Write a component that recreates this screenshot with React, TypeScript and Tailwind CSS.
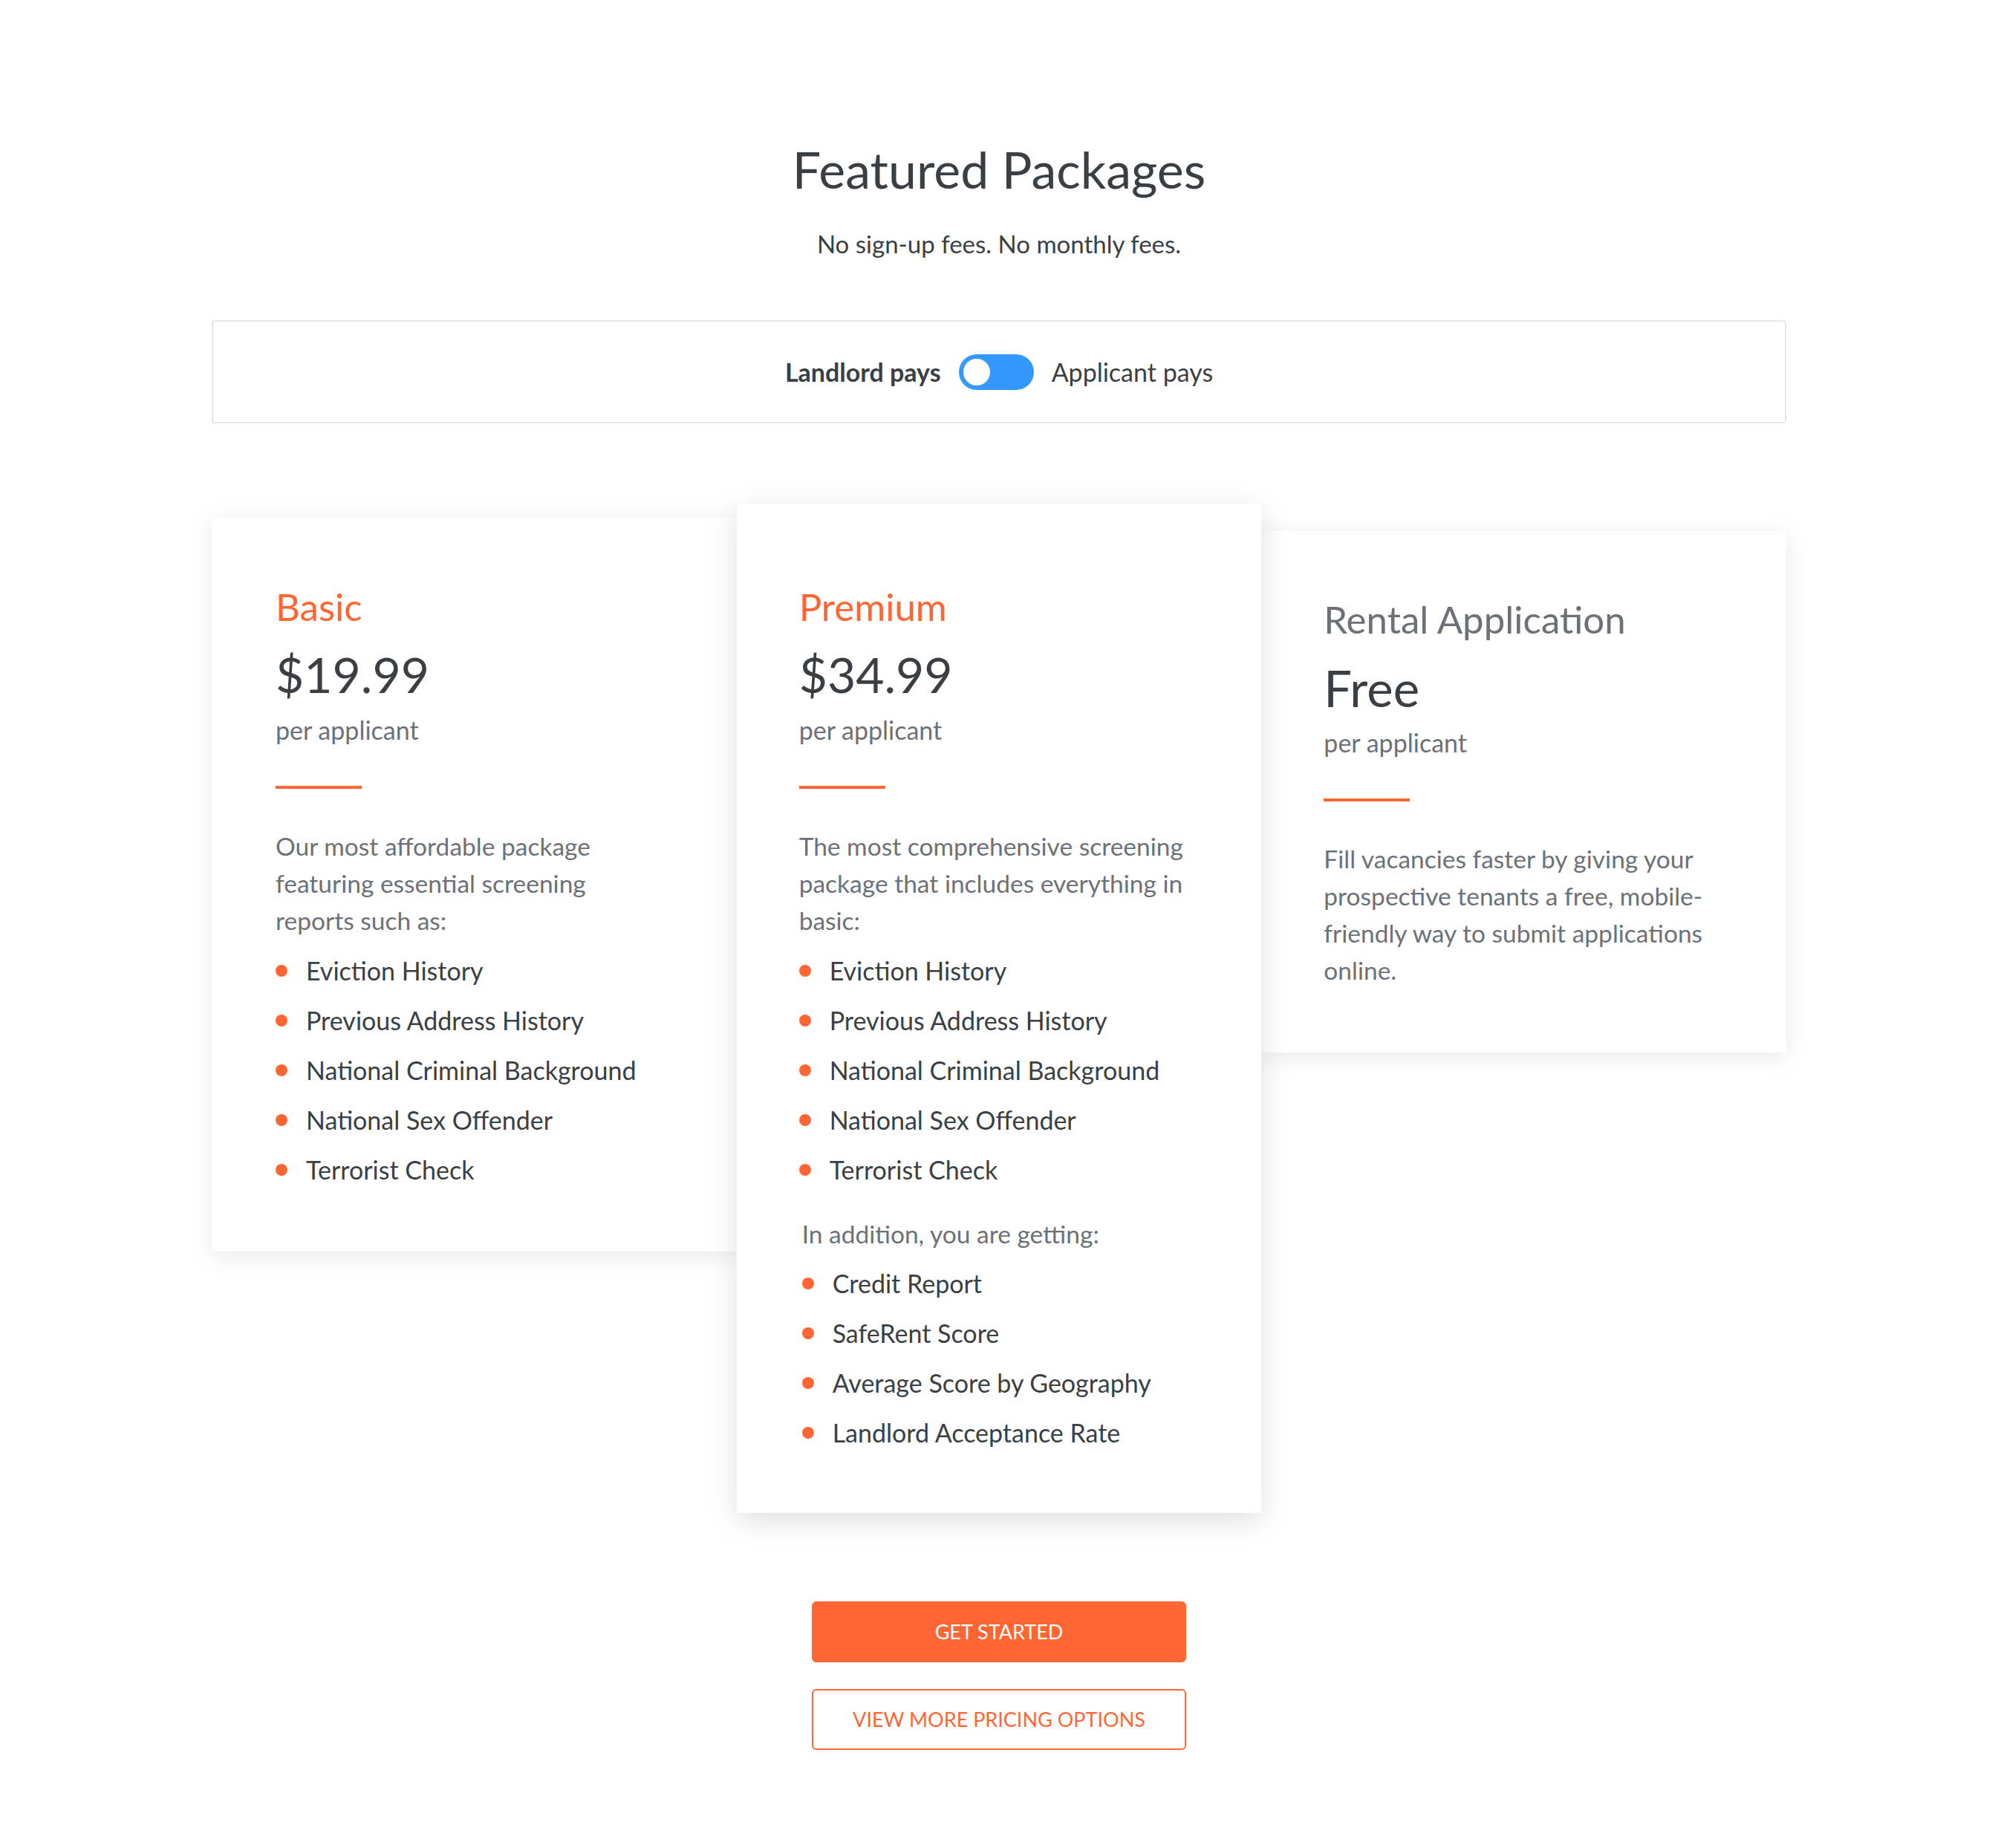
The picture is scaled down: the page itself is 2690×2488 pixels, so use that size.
const basicItems = [
  'Eviction History',
  'Previous Address History',
  'National Criminal Background',
  'National Sex Offender',
  'Terrorist Check',
];

const extraItems = [
  'Credit Report',
  'SafeRent Score',
  'Average Score by Geography',
  'Landlord Acceptance Rate',
];

function BulletList({ items }: { items: string[] }) {
  return (
    <ul className="flex flex-col gap-[17px]">
      {items.map((item) => (
        <li key={item} className="flex items-center text-[34px] leading-[50px] text-[#3a3f44]">
          <span className="mr-[25px] h-[16px] w-[16px] shrink-0 rounded-full bg-[#ff6633]" />
          {item}
        </li>
      ))}
    </ul>
  );
}

function CardHead({ title, price, titleClass }: { title: string; price: string; titleClass: string }) {
  return (
    <>
      <h3 className={`text-[51px] leading-[58px] ${titleClass}`}>{title}</h3>
      <div className="mt-[23px] text-[66px] leading-[78px] text-[#3a3f44]">{price}</div>
      <div className="mt-[16px] text-[34px] leading-[40px] text-[#6c7177]">per applicant</div>
      <div className="mt-[55px] h-[4px] w-[116px] bg-[#ff6633]" />
    </>
  );
}

export default function App() {
  return (
    <div className="min-h-screen bg-white pt-[185px] pb-[131px] font-['Lato',sans-serif]">
      <h1 className="text-center text-[68px] leading-[86px] text-[#3a3f44]">Featured Packages</h1>
      <p className="mt-[37px] text-center text-[33px] leading-[40px] text-[#3a3f44]">
        No sign-up fees. No monthly fees.
      </p>

      <div className="mx-auto mt-[83px] flex h-[139px] w-[2120px] items-center justify-center gap-[24px] rounded-[4px] border-2 border-[#e6e6e6]">
        <span className="text-[34px] font-bold text-[#3a3f44]">Landlord pays</span>
        <div className="flex h-[48px] w-[101px] items-center rounded-full bg-[#3399ff] px-[6px]">
          <div className="h-[36px] w-[36px] rounded-full bg-white" />
        </div>
        <span className="text-[34px] text-[#3a3f44]">Applicant pays</span>
      </div>

      <div className="mx-auto mt-[108px] grid w-[2120px] grid-cols-3 items-start">
        <div className="relative z-0 mt-[19px] bg-white pt-[91px] pr-[100px] pb-[85px] pl-[86px] shadow-[0_6px_30px_rgba(0,0,0,0.09)]">
          <CardHead title="Basic" price="$19.99" titleClass="text-[#ff6633]" />
          <p className="mt-[52px] text-[33.5px] leading-[50px] text-[#6c7177]">
            Our most affordable package featuring essential screening reports such as:
          </p>
          <div className="mt-[18px]">
            <BulletList items={basicItems} />
          </div>
        </div>

        <div className="relative z-10 bg-white pt-[110px] pr-[102px] pb-[83px] pl-[84px] shadow-[0_10px_36px_rgba(0,0,0,0.13)]">
          <CardHead title="Premium" price="$34.99" titleClass="text-[#ff6633]" />
          <p className="mt-[52px] text-[33.5px] leading-[50px] text-[#6c7177]">
            The most comprehensive screening package that includes everything in basic:
          </p>
          <div className="mt-[18px]">
            <BulletList items={basicItems} />
          </div>
          <p className="mt-[36px] pl-[4px] text-[33.5px] leading-[50px] text-[#6c7177]">
            In addition, you are getting:
          </p>
          <div className="mt-[17px] pl-[4px]">
            <BulletList items={extraItems} />
          </div>
        </div>

        <div className="relative z-0 mt-[37px] bg-white pt-[90px] pr-[102px] pb-[86px] pl-[84px] shadow-[0_6px_30px_rgba(0,0,0,0.09)]">
          <h3 className="text-[51px] leading-[58px] text-[#6c7177]">Rental Application</h3>
          <div className="mt-[24px] text-[67px] leading-[78px] text-[#3a3f44]">Free</div>
          <div className="mt-[15px] text-[34px] leading-[40px] text-[#6c7177]">per applicant</div>
          <div className="mt-[55px] h-[4px] w-[116px] bg-[#ff6633]" />
          <p className="mt-[52px] text-[33.5px] leading-[50px] text-[#6c7177]">
            Fill vacancies faster by giving your prospective tenants a free, mobile-friendly way to submit
            applications online.
          </p>
        </div>
      </div>

      <div className="mt-[119px] flex flex-col items-center gap-[36px]">
        <button className="flex h-[82px] w-[504px] items-center justify-center rounded-[6px] bg-[#ff6633] text-[27px] text-white">
          GET STARTED
        </button>
        <button className="flex h-[82px] w-[504px] items-center justify-center rounded-[6px] border-2 border-[#ff6633] bg-white text-[27px] text-[#ff6633]">
          VIEW MORE PRICING OPTIONS
        </button>
      </div>
    </div>
  );
}
